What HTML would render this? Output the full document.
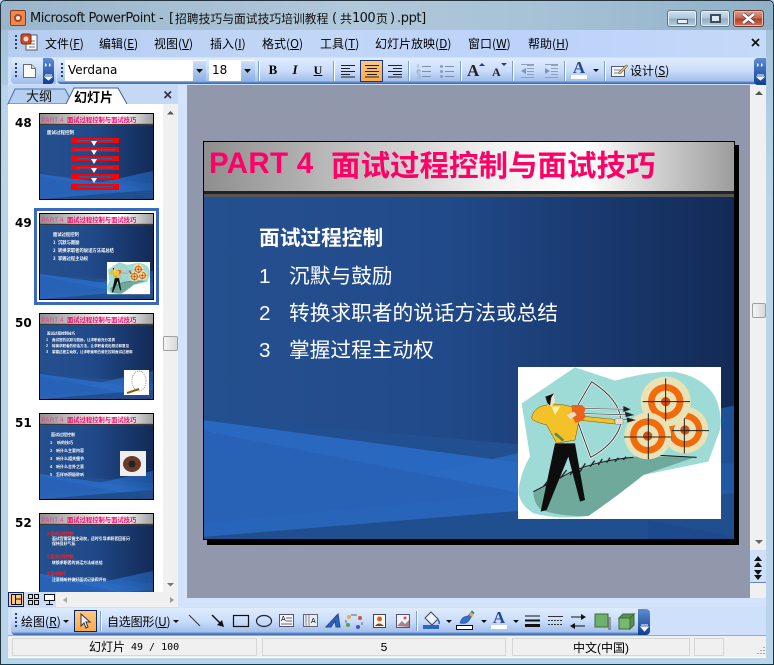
<!DOCTYPE html>
<html><head><meta charset="utf-8"><style>
html,body{margin:0;padding:0;width:774px;height:665px;overflow:hidden;background:#b9d5ec}
*{box-sizing:border-box}
.a{position:absolute}
.t{position:absolute;font:12px/14px "Liberation Sans","Noto Sans CJK SC",sans-serif;color:#000;white-space:nowrap}
.m{position:absolute;top:36px;font:12px/15px "WenQuanYi Zen Hei","Noto Sans CJK SC",sans-serif;white-space:nowrap;color:#000}
u{text-decoration:underline}
.sep{position:absolute;background:#7f9fce;border-right:1px solid #fff;width:2px}
.grip{position:absolute;width:2px;background:repeating-linear-gradient(#27416b 0 2px,#fff0 2px 4px)}
.st{position:absolute;top:638px;height:18px;background:#f0f0f0;border:1px solid #d6d6d6;text-align:center;font:12px/18px "Liberation Mono","WenQuanYi Zen Hei",monospace}
svg{position:absolute;overflow:visible}
.tp{font-family:"Liberation Sans",sans-serif;font-size:6.200px;fill:#e8408a;letter-spacing:.2px}
.tc{font-family:"Noto Sans CJK SC",sans-serif;font-size:6.300px;font-weight:bold;fill:#ff0066}
</style></head><body>
<!-- window frame -->
<div class="a" style="left:0;top:0;width:774px;height:665px;background:linear-gradient(#9fbcd2,#a9c8e0 10%,#b9d5ec 30%);border:1px solid #24323c;border-bottom-color:#0c3c44;border-radius:5px 5px 0 0"></div>
<div class="a" style="left:1px;top:1px;width:772px;height:29px;background:linear-gradient(90deg,#9ab6cc,#b0c8da 45%,#a7c2d6 70%,#8fb0c8);border-radius:5px 5px 0 0"></div>
<!-- app icon -->
<div class="a" style="left:10px;top:10px;width:16px;height:16px;background:#e88a52;border:1px solid #8a3b18;border-radius:2px"><div class="a" style="left:3px;top:3px;width:8px;height:8px;border-radius:50%;background:#fff2dc;border:2px solid #b8401f"></div></div>
<div class="t" style="left:30px;top:11px;font:13px/16px 'DejaVu Sans',sans-serif;color:#111;letter-spacing:-.48px">Microsoft PowerPoint</div>
<div class="t" style="left:159px;top:11px;font:13px/16px 'DejaVu Sans',sans-serif;color:#111">-</div>
<div class="t" style="left:169px;top:11px;font:13px/16px 'DejaVu Sans',sans-serif;color:#111">[</div>
<div class="t" style="left:175px;top:11px;font:11.800px/16px 'WenQuanYi Zen Hei','Noto Sans CJK SC',sans-serif;color:#111">招聘技巧与面试技巧培训教程</div>
<div class="t" style="left:332px;top:11px;font:13px/16px 'DejaVu Sans',sans-serif;color:#111">(</div>
<div class="t" style="left:340px;top:11px;font:12px/16px 'WenQuanYi Zen Hei','Noto Sans CJK SC',sans-serif;color:#111">共</div>
<div class="t" style="left:352px;top:11px;font:13px/16px 'DejaVu Sans',sans-serif;color:#111;letter-spacing:-.6px">100</div>
<div class="t" style="left:376px;top:11px;font:12px/16px 'WenQuanYi Zen Hei','Noto Sans CJK SC',sans-serif;color:#111">页</div>
<div class="t" style="left:390px;top:11px;font:13px/16px 'DejaVu Sans',sans-serif;color:#111">)</div>
<div class="t" style="left:397px;top:11px;font:13px/16px 'DejaVu Sans',sans-serif;color:#111;letter-spacing:-.4px">.ppt]</div>
<!-- window buttons -->
<div class="a" style="left:667px;top:10px;width:30px;height:17px;border:1px solid #5f7486;border-radius:3px;background:linear-gradient(#d3e1ec,#aec6d8 50%,#8fabc0 52%,#b5cfe0);box-shadow:inset 0 0 0 1px #e4eef5"><div class="a" style="left:9px;top:8px;width:11px;height:5px;background:#e8f0f5;border:1px solid #52616e"></div></div>
<div class="a" style="left:700px;top:10px;width:30px;height:17px;border:1px solid #5f7486;border-radius:3px;background:linear-gradient(#d3e1ec,#aec6d8 50%,#8fabc0 52%,#b5cfe0);box-shadow:inset 0 0 0 1px #e4eef5"><div class="a" style="left:9px;top:3px;width:11px;height:9px;background:#dfe8ee;border:2px solid #3e4c58"></div></div>
<div class="a" style="left:733px;top:10px;width:31px;height:17px;border:1px solid #6b3a34;border-radius:3px;background:linear-gradient(#dd9c8e,#c9644f 50%,#ae3d26 52%,#cf7458);box-shadow:inset 0 0 0 1px #eab9ab"></div>
<svg style="left:733px;top:10px" width="31" height="17"><path d="M10 4L21 13M21 4L10 13" stroke="#445" stroke-width="4"/><path d="M10 4L21 13M21 4L10 13" stroke="#fff" stroke-width="2.600"/></svg>
<!-- menu bar -->
<div class="a" style="left:8px;top:30px;width:758px;height:27px;background:linear-gradient(90deg,#b5cdf0,#c2d7f8 40%,#bcd2fa 70%,#c5daf8)"></div>
<div class="grip" style="left:15px;top:35px;height:16px"></div>
<svg style="left:20px;top:33px" width="18" height="20"><rect x="6" y="2" width="11" height="15" fill="#f8f8f4" stroke="#556"/><path d="M9 8h6M9 11h6M9 14h6" stroke="#778"/><rect x="1" y="1" width="10" height="10" rx="2" fill="#cf4a2c" stroke="#7a2a18"/><circle cx="6" cy="6" r="2.500" fill="#f6d8c6"/></svg>
<div class="m" style="left:45px">文件(<u>F</u>)</div>
<div class="m" style="left:99px">编辑(<u>E</u>)</div>
<div class="m" style="left:154px">视图(<u>V</u>)</div>
<div class="m" style="left:210px">插入(<u>I</u>)</div>
<div class="m" style="left:262px">格式(<u>O</u>)</div>
<div class="m" style="left:320px">工具(<u>T</u>)</div>
<div class="m" style="left:375px">幻灯片放映(<u>D</u>)</div>
<div class="m" style="left:468px">窗口(<u>W</u>)</div>
<div class="m" style="left:528px">帮助(<u>H</u>)</div>
<svg style="left:750px;top:37px" width="12" height="12"><path d="M2 2L9 9M9 2L2 9" stroke="#111" stroke-width="1.700"/></svg>
<!-- standard toolbar -->
<div class="a" style="left:8px;top:57px;width:758px;height:28px;background:#cfe0fb"></div>
<div class="a" style="left:11px;top:58px;width:45px;height:26px;border-radius:4px 0 0 4px;background:linear-gradient(#dfecfd,#c3d7f7 55%,#9fbcea)"></div>
<div class="a" style="left:43px;top:58px;width:11px;height:26px;border-radius:0 4px 4px 0;background:linear-gradient(#5f8bd0,#0f3f94)"></div>
<div class="a" style="left:57px;top:58px;width:700px;height:26px;border-radius:4px 0 0 4px;background:linear-gradient(#dfecfd,#c9dcfa 50%,#a3bfeb 88%,#3f70b8 96%)"></div>
<div class="a" style="left:754px;top:58px;width:12px;height:27px;border-radius:4px 0 0 4px;background:linear-gradient(#5f8bd0,#0f3f94)"></div>
<svg style="left:44px;top:60px" width="10" height="22"><path d="M1 3l2 2-2 2zM5 3l2 2-2 2z" fill="#fff"/><path d="M1 15h7M1 17h7l-3.500 3z" stroke="#fff" fill="#fff"/></svg>
<svg style="left:755px;top:60px" width="10" height="22"><path d="M2 3l2 2-2 2zM6 3l2 2-2 2z" fill="#fff"/><path d="M2 15h7M2 17h7l-3.500 3z" stroke="#fff" fill="#fff"/></svg>
<div class="grip" style="left:15px;top:63px;height:16px"></div>
<div class="grip" style="left:61px;top:63px;height:16px"></div>
<svg style="left:23px;top:64px" width="13" height="14"><path d="M.5.500h8l4 4v9H.5z" fill="#fbfbf6" stroke="#6a6a6a"/><path d="M8.500.500v4h4" fill="#ddd" stroke="#777"/></svg>
<div class="a" style="left:65px;top:60px;width:141px;height:21px;background:#fff"></div>
<div class="t" style="left:68px;top:63px;font:12px/14px 'DejaVu Sans',sans-serif">Verdana</div>
<div class="a" style="left:193px;top:61px;width:13px;height:20px;background:linear-gradient(#cddffa,#8fb0e4)"></div>
<svg style="left:193px;top:67px" width="13" height="8"><path d="M3 2h7l-3.500 4z" fill="#111"/></svg>
<div class="a" style="left:209px;top:60px;width:46px;height:21px;background:#fff"></div>
<div class="t" style="left:212px;top:63px;font:12px/14px 'DejaVu Sans',sans-serif">18</div>
<div class="a" style="left:241px;top:61px;width:14px;height:20px;background:linear-gradient(#cddffa,#8fb0e4)"></div>
<svg style="left:241px;top:67px" width="14" height="8"><path d="M3 2h7l-3.500 4z" fill="#111"/></svg>
<div class="sep" style="left:258px;top:61px;height:20px"></div>
<div class="t" style="left:267px;top:62px;width:12px;text-align:center;font:bold 13px/16px 'Liberation Serif',serif">B</div>
<div class="t" style="left:289px;top:62px;width:12px;text-align:center;font:italic bold 13px/16px 'Liberation Serif',serif">I</div>
<div class="t" style="left:312px;top:62px;width:12px;text-align:center;font:bold 12px/16px 'Liberation Serif',serif;text-decoration:underline">U</div>
<div class="sep" style="left:333px;top:61px;height:20px"></div>
<svg style="left:340px;top:64px" width="16" height="14"><path d="M1 1.500h14M1 4.500h9M1 7.500h14M1 10.500h9M1 13h14" stroke="#222"/></svg>
<div class="a" style="left:360px;top:60px;width:23px;height:22px;background:linear-gradient(#ffc97c,#fea94a);border:1px solid #1d3a80"></div>
<svg style="left:364px;top:64px" width="16" height="14"><path d="M1 1.500h14M3 4.500h10M1 7.500h14M3 10.500h10M1 13h14" stroke="#222"/></svg>
<svg style="left:387px;top:64px" width="16" height="14"><path d="M1 1.500h14M6 4.500h9M1 7.500h14M6 10.500h9M1 13h14" stroke="#222"/></svg>
<div class="sep" style="left:408px;top:61px;height:20px"></div>
<svg style="left:416px;top:63px" width="16" height="16"><path d="M6 3.500h9M6 8.500h9M6 13.500h9" stroke="#7d8ea8"/><path d="M2 1v4M1 7h3v1H1v2h3M1 12h3v3H1" stroke="#a3b0c4" fill="none"/></svg>
<svg style="left:439px;top:63px" width="16" height="16"><path d="M6 3.500h9M6 8.500h9M6 13.500h9" stroke="#7d8ea8"/><circle cx="2.500" cy="3.500" r="1.500" fill="#8e9cb2"/><circle cx="2.500" cy="8.500" r="1.500" fill="#8e9cb2"/><circle cx="2.500" cy="13.500" r="1.500" fill="#8e9cb2"/></svg>
<div class="sep" style="left:460px;top:61px;height:20px"></div>
<div class="t" style="left:467px;top:62px;font:bold 17px/18px 'Liberation Serif',serif;color:#222">A</div>
<svg style="left:478px;top:62px" width="8" height="5"><path d="M1 4h6L4 1z" fill="#1f3f82"/></svg>
<div class="t" style="left:492px;top:66px;font:bold 12px/13px 'Liberation Serif',serif;color:#222">A</div>
<svg style="left:500px;top:62px" width="8" height="5"><path d="M1 1h6L4 4z" fill="#1f3f82"/></svg>
<div class="sep" style="left:512px;top:61px;height:20px"></div>
<svg style="left:519px;top:63px" width="16" height="16"><path d="M8 2.500h7M8 5.500h7M8 8.500h7M8 11.500h7M2 14.500h13M2 1.500h13" stroke="#90a0b8"/><path d="M7 5v6L2 8z" fill="#7e95bd"/></svg>
<svg style="left:543px;top:63px" width="16" height="16"><path d="M8 2.500h7M8 5.500h7M8 8.500h7M8 11.500h7M2 14.500h13M2 1.500h13" stroke="#90a0b8"/><path d="M2 5v6l5-3z" fill="#7e95bd"/></svg>
<div class="sep" style="left:564px;top:61px;height:20px"></div>
<div class="t" style="left:571px;top:59px;width:16px;text-align:center;font:bold 17px/17px 'Liberation Serif',serif;color:#27498e">A</div>
<div class="a" style="left:571px;top:75px;width:16px;height:4px;background:#fff"></div>
<svg style="left:592px;top:68px" width="8" height="5"><path d="M1 1h6L4 4z" fill="#111"/></svg>
<div class="sep" style="left:604px;top:61px;height:20px"></div>
<svg style="left:611px;top:63px" width="18" height="15"><rect x=".5" y="3.500" width="13" height="10" fill="#f4f6fa" stroke="#4d5a7a"/><path d="M3 7h7M3 10h5" stroke="#7788aa"/><path d="M7 10l8-8 2 1-8 8z" fill="#e5c33c" stroke="#6a6a7a" stroke-width=".6"/></svg>
<div class="m" style="left:630px;top:63px">设计(<u>S</u>)</div>
<!-- left panel -->
<div class="a" style="left:2px;top:85px;width:176px;height:522px;background:#b9d5ec"></div>
<div class="a" style="left:178px;top:85px;width:9px;height:522px;background:#d3e3fb"></div>
<div class="a" style="left:8px;top:85px;width:170px;height:19px;background:#c5d9f6"></div>
<svg style="left:8px;top:87px" width="122" height="18"><path d="M0 17L7 2h50l8 15z" fill="#b5cff0" stroke="#4a6ea8"/><path d="M58 17L66 1h44l9 16z" fill="#fff"/><path d="M58 17L66 1h44l9 16" fill="none" stroke="#3f5f98"/></svg>
<div class="t" style="left:26px;top:89px;font:13px/15px 'WenQuanYi Zen Hei',sans-serif;color:#111">大纲</div>
<div class="t" style="left:74px;top:89px;font:bold 13px/15px 'WenQuanYi Zen Hei','Noto Sans CJK SC',sans-serif">幻灯片</div>
<svg style="left:163px;top:90px" width="10" height="10"><path d="M1.500 1.500L8 8M8 1.500L1.500 8" stroke="#334" stroke-width="1.700"/></svg>
<div class="a" style="left:8px;top:104px;width:155px;height:488px;background:#fff"></div>
<div class="a" style="left:163px;top:104px;width:15px;height:488px;background:#f0f0f0"></div>
<svg style="left:166px;top:110px" width="9" height="6"><path d="M1 4.500h7L4.500 1z" fill="#555"/></svg>
<svg style="left:166px;top:582px" width="9" height="6"><path d="M1 1h7L4.500 4.500z" fill="#777"/></svg>
<div class="a" style="left:163px;top:336px;width:15px;height:15px;background:linear-gradient(90deg,#f4f4f4,#d8d8d8);border:1px solid #a0a0a0;border-radius:2px"></div>
<!-- shared slide background + picture -->
<svg width="0" height="0" style="left:0;top:0"><defs>
<linearGradient id="g" x1="0" y1="0" x2="1" y2="0"><stop offset="0" stop-color="#25508f"/><stop offset=".45" stop-color="#214a8a"/><stop offset="1" stop-color="#132a56"/></linearGradient>
<linearGradient id="h" x1="0" y1="0" x2="1" y2="0"><stop offset="0" stop-color="#8e8e8e"/><stop offset=".55" stop-color="#f2f2f2"/><stop offset=".72" stop-color="#fff"/><stop offset="1" stop-color="#9c9c9c"/></linearGradient>
<linearGradient id="w" x1="0" y1="0" x2="1" y2="0"><stop offset="0" stop-color="#2a6ac4"/><stop offset=".7" stop-color="#2a6ac4"/><stop offset="1" stop-color="#1f5aa8"/></linearGradient>
<symbol id="bg" viewBox="0 0 531 399" preserveAspectRatio="none">
<rect width="531" height="399" fill="url(#g)"/>
<g transform="translate(1,1)">
<path d="M-1 274L531 322V399H-1z" fill="#224f90"/>
<path d="M-1 278L531 350V394L-1 289z" fill="url(#w)" opacity=".92"/>
<path d="M-1 381L531 263V351L-1 395z" fill="url(#w)" opacity=".78"/>
<path d="M-1 289L315 351L-1 381z" fill="#2862b6"/>
<path d="M-1 395L531 351V399H-1z" fill="#204f90"/>
<path d="M443 378L531 395V399H443z" fill="#1d4a8c"/>
</g>
<rect width="531" height="50" fill="url(#h)"/>
<rect y="50" width="531" height="3" fill="#222"/>
<rect y="53" width="531" height="3" fill="#555"/>
</symbol>
<g id="arch">
<rect x="54" y="51" width="609" height="456" fill="#fff"/>
<path d="M65 160L225 52L345 92Q440 65 520 65Q610 80 645 140Q668 190 660 240L625 335L430 375Q350 440 265 498Q180 510 100 490Q55 460 55 420Q65 360 90 320Z" fill="#9edbd6"/>
<path d="M100 425Q250 340 400 320L590 320L430 375Q350 440 265 498Q180 500 125 480Q100 460 100 425Z" fill="#6fa99c"/>
<path d="M100 425L215 365M215 365Q300 330 400 322M480 316L590 322" stroke="#111" stroke-width="3" fill="none"/>
<path d="M130 410l20-25M150 400l20-25M180 385l20-25M210 375l18-25M240 365l16-25M270 350l14-18M295 345l12-18M320 338l10-15M345 335l10-12M370 330l8-10" stroke="#222" stroke-width="4"/>
<circle cx="555" cy="240" r="70" fill="#e9e2b6"/><circle cx="555" cy="240" r="52" fill="#f26a09"/><circle cx="555" cy="240" r="33" fill="#e9e2b6"/><circle cx="555" cy="240" r="14" fill="#d94f05"/>
<path d="M515 242h112M553 195v115" stroke="#222" stroke-width="3"/>
<circle cx="497" cy="155" r="75" fill="#e9e2b6"/><circle cx="497" cy="155" r="53" fill="#f26a09"/><circle cx="497" cy="155" r="33" fill="#e9e2b6"/><circle cx="497" cy="155" r="14" fill="#d94f05"/>
<path d="M428 155h142M497 85v130" stroke="#222" stroke-width="3"/>
<circle cx="443" cy="258" r="70" fill="#e9e2b6"/><circle cx="443" cy="258" r="53" fill="#f26a09"/><circle cx="443" cy="258" r="33" fill="#e9e2b6"/><circle cx="443" cy="258" r="14" fill="#d94f05"/>
<path d="M372 261h142M445 190v138" stroke="#222" stroke-width="3"/>
<path d="M275 95Q375 160 360 230Q340 285 272 322L222 185Z" fill="none" stroke="#fff" stroke-width="7"/>
<path d="M275 95Q375 160 360 230Q340 285 272 322L222 185Z" fill="none" stroke="#333" stroke-width="3"/>
<path d="M230 175L385 178M230 190L395 195M240 205L405 210" stroke="#fff" stroke-width="5"/>
<path d="M230 175L385 178M230 190L395 195M240 205L405 210" stroke="#333" stroke-width="2"/>
<path d="M370 168l22 10-22 8zM375 185l28 10-26 6zM380 202l28 8-26 8z" fill="#222"/>
<path d="M122 485L165 280H225L255 450L240 455L205 320L140 480Z" fill="#0d0d0d"/>
<path d="M120 170Q160 155 215 170L235 210L345 222V208L240 198L225 270L170 280L140 225Q100 215 95 205Q95 185 120 170Z" fill="#f2c228" stroke="#6a5410" stroke-width="1.500"/>
<path d="M155 170l25 0-15 25z" fill="#fff3b0"/>
<path d="M165 250l25 22" stroke="#5c8a4f" stroke-width="8"/>
<path d="M140 135l22-5 3 25-10 15-12-5z" fill="#f2e0d0"/><path d="M136 140l26-10-8 12-4 25-8-8z" fill="#111"/>
<path d="M215 165h30l12 10-5 14 5 10-8 12-22 8-10-18z" fill="#e8641a"/>
<rect x="345" y="205" width="24" height="18" rx="4" fill="#eddccb" stroke="#555"/>
<path d="M200 195l22-10 8 10-18 12z" fill="#f0dcc8"/>
</g>
</defs></svg>
<!-- thumbs -->
<div class="t" style="left:15px;top:116px;font:bold 12px/14px 'DejaVu Sans',sans-serif">48</div>
<div class="t" style="left:15px;top:216px;font:bold 12px/14px 'DejaVu Sans',sans-serif">49</div>
<div class="t" style="left:15px;top:316px;font:bold 12px/14px 'DejaVu Sans',sans-serif">50</div>
<div class="t" style="left:15px;top:416px;font:bold 12px/14px 'DejaVu Sans',sans-serif">51</div>
<div class="t" style="left:15px;top:516px;font:bold 12px/14px 'DejaVu Sans',sans-serif">52</div>
<div class="a" style="left:34px;top:208px;width:125px;height:97px;border:3px solid #3a69bd"></div>
<svg style="left:39px;top:113px" width="115" height="87"><use href="#bg" width="115" height="87"/><rect x=".5" y=".5" width="114" height="86" fill="none" stroke="#000"/>
<text x="2.500" y="9" class="tp">PART 4</text><text x="28" y="9" class="tc">面试过程控制与面试技巧</text>
<text x="8" y="21" font-size="4.500" fill="#fff" font-weight="bold" font-family="Noto Sans CJK SC">面试过程控制</text>
<g fill="#f00"><rect x="32" y="25" width="48" height="5"/><rect x="32" y="34" width="48" height="5"/><rect x="32" y="43" width="48" height="5"/><rect x="32" y="52" width="48" height="5"/><rect x="32" y="61" width="48" height="5"/><rect x="32" y="71" width="48" height="6"/></g>
<g fill="#2c5ea8"><rect x="38" y="27" width="36" height="1.500"/><rect x="36" y="36" width="40" height="1.500"/><rect x="38" y="45" width="36" height="1.500"/><rect x="38" y="54" width="36" height="1.500"/><rect x="40" y="63" width="32" height="1.500"/><rect x="38" y="73" width="36" height="1.500"/></g>
<g fill="#fff"><path d="M52 28h6l-3 5zM52 37h6l-3 5zM52 46h6l-3 5zM52 55h6l-3 5zM52 65h6l-3 5z"/></g></svg>
<svg style="left:39px;top:213px" width="115" height="87"><use href="#bg" width="115" height="87"/><rect x=".5" y=".5" width="114" height="86" fill="none" stroke="#000"/>
<text x="2.500" y="9" class="tp">PART 4</text><text x="28" y="9" class="tc">面试过程控制与面试技巧</text>
<g fill="#fff" font-family="Noto Sans CJK SC" font-size="4.300" font-weight="bold"><text x="14" y="23">面试过程控制</text><text x="14" y="31">1</text><text x="19" y="31">沉默与鼓励</text><text x="14" y="39">2</text><text x="19" y="39">转换求职者的说话方法或总结</text><text x="14" y="47">3</text><text x="19" y="47">掌握过程主动权</text></g>
<g transform="translate(68,49) scale(.0706) translate(-54,-51)"><use href="#arch"/></g></svg>
<svg style="left:39px;top:313px" width="115" height="87"><use href="#bg" width="115" height="87"/><rect x=".5" y=".5" width="114" height="86" fill="none" stroke="#000"/>
<text x="2.500" y="9" class="tp">PART 4</text><text x="28" y="9" class="tc">面试过程控制与面试技巧</text>
<g fill="#fff" font-family="Noto Sans CJK SC" font-size="3.500" font-weight="bold"><text x="8" y="21.500">面试过程控制技巧</text><text x="7" y="28">1</text><text x="13" y="28">面试官的沉默与鼓励，让求职者充分发表</text><text x="7" y="34">2</text><text x="13" y="34">转换求职者的说话方法，让求职者说出想法和意见</text><text x="7" y="40">3</text><text x="13" y="40">掌握过程主动权，让求职者明白谁在控制面试过程和</text></g>
<rect x="85" y="57" width="25" height="25" fill="#fff"/><ellipse cx="100" cy="68" rx="7" ry="10" fill="#fff" stroke="#999" stroke-dasharray="1 1"/><path d="M88 80l12-4" stroke="#8a5a14" stroke-width="2"/></svg>
<svg style="left:39px;top:413px" width="115" height="87"><use href="#bg" width="115" height="87"/><rect x=".5" y=".5" width="114" height="86" fill="none" stroke="#000"/>
<text x="2.500" y="9" class="tp">PART 4</text><text x="28" y="9" class="tc">面试过程控制与面试技巧</text>
<g fill="#fff" font-family="Noto Sans CJK SC" font-size="4" font-weight="bold"><text x="12" y="23">面试过程控制</text><text x="11" y="31">1</text><text x="18" y="31">听的技巧</text><text x="11" y="39">2</text><text x="17" y="39">听什么主要内容</text><text x="11" y="47">3</text><text x="17" y="47">听什么相关细节</text><text x="11" y="55">4</text><text x="17" y="55">听什么言外之意</text><text x="11" y="63">5</text><text x="17" y="63">怎样听积极聆听</text></g>
<rect x="81" y="38" width="26" height="25" fill="#eee"/><ellipse cx="93" cy="51" rx="9" ry="8" fill="#6b3b2a"/><circle cx="93" cy="51" r="3.500" fill="#222"/></svg>
<div class="a" style="left:39px;top:513px;width:115px;height:79px;overflow:hidden"><svg style="left:0;top:0" width="115" height="87"><use href="#bg" width="115" height="87"/><rect x=".5" y=".5" width="114" height="86" fill="none" stroke="#000"/>
<text x="2.500" y="9" class="tp">PART 4</text><text x="28" y="9" class="tc">面试过程控制与面试技巧</text>
<g font-family="Noto Sans CJK SC" font-size="3.900" font-weight="bold"><text x="8" y="22" fill="#f22">1 面试过程控制</text><text x="13" y="27" fill="#fff">面试官需掌握主动权，适时引导求职者回答问</text><text x="13" y="32" fill="#fff">保持良好气氛</text><text x="8" y="45" fill="#f22">2 面试过程控制</text><text x="13" y="51" fill="#fff">转换求职者的说话方法或总结</text><text x="8" y="62" fill="#f22">3 面试技巧</text><text x="13" y="68" fill="#fff">注意倾听并做好面试记录和评价</text></g></svg></div>
<!-- bottom left view buttons -->
<div class="a" style="left:8px;top:592px;width:48px;height:15px;background:#c9dcf8"></div>
<div class="a" style="left:56px;top:592px;width:122px;height:15px;background:#f0f0f0"></div>
<div class="a" style="left:8px;top:592px;width:16px;height:15px;background:#ffc97c;border:1px solid #0a246a"></div>
<svg style="left:11px;top:594px" width="50" height="12"><rect x=".5" y=".5" width="10" height="10" fill="none" stroke="#111"/><path d="M4.500 1v9M5 5h5" stroke="#111"/><path d="M17.500.500h4v4h-4zM23.500.500h4v4h-4zM17.500 6.500h4v4h-4zM23.500 6.500h4v4h-4z" fill="none" stroke="#111"/><rect x="33.500" y=".5" width="10" height="6" fill="#fff" stroke="#111"/><path d="M38.500 7v3M35 10.500h7" stroke="#111"/></svg>
<svg style="left:62px;top:596px" width="112" height="8"><path d="M5 1v6L1 4z" fill="#aaa"/><path d="M108 1v6l4-3z" fill="#999"/></svg>
<!-- main area -->
<div class="a" style="left:187px;top:85px;width:563px;height:513px;background:#9198ac"></div>
<div class="a" style="left:750px;top:85px;width:16px;height:522px;background:#f0f0f0"></div>
<svg style="left:754px;top:90px" width="10" height="6"><path d="M1 5h8L5 1z" fill="#555"/></svg>
<svg style="left:754px;top:539px" width="10" height="6"><path d="M1 1h8L5 5z" fill="#666"/></svg>
<div class="a" style="left:752px;top:303px;width:14px;height:15px;background:linear-gradient(90deg,#f4f4f4,#d8d8d8);border:1px solid #a0a0a0;border-radius:2px"></div>
<div class="a" style="left:750px;top:550px;width:16px;height:33px;background:#cfe0fb;border-bottom:1px solid #5f86cc"></div>
<svg style="left:752px;top:555px" width="12" height="26"><path d="M2 6h8L6 1zM2 12h8L6 7zM2 15h8l-4 5zM2 20h8l-4 5z" fill="#111"/></svg>
<div class="a" style="left:187px;top:598px;width:579px;height:10px;background:#d3e3fb;border-bottom:1px solid #6a8fc8"></div>
<!-- slide -->
<div class="a" style="left:207px;top:145px;width:532px;height:400px;background:#000"></div>
<svg style="left:203px;top:141px" width="532" height="399"><use href="#bg" width="532" height="399"/><rect x=".5" y=".5" width="531" height="398" fill="none" stroke="#000"/></svg>
<div class="t" style="left:209px;top:146px;font:bold 29.500px/36px 'Liberation Sans',sans-serif;color:#ff0066;letter-spacing:.3px">PART 4</div>
<div class="t" style="left:331px;top:146px;font:bold 29.500px/36px 'Noto Sans CJK SC',sans-serif;color:#ff0066">面试过程控制与面试技巧</div>
<div class="t" style="left:259px;top:223px;font:bold 20.700px/26px 'Noto Sans CJK SC',sans-serif;color:#fff">面试过程控制</div>
<div class="t" style="left:259px;top:261px;font:20.700px/26px 'Noto Sans CJK SC',sans-serif;color:#fff"><span style="display:inline-block;width:30px;font-family:'Liberation Sans'">1</span>沉默与鼓励</div>
<div class="t" style="left:259px;top:298px;font:20.700px/26px 'Noto Sans CJK SC',sans-serif;color:#fff"><span style="display:inline-block;width:30px;font-family:'Liberation Sans'">2</span>转换求职者的说话方法或总结</div>
<div class="t" style="left:259px;top:335px;font:20.700px/26px 'Noto Sans CJK SC',sans-serif;color:#fff"><span style="display:inline-block;width:30px;font-family:'Liberation Sans'">3</span>掌握过程主动权</div>
<!-- archer picture -->
<svg style="left:500px;top:350px" width="240" height="200" viewBox="0 0 720 600"><use href="#arch"/></svg>
<!-- bottom toolbar -->
<div class="a" style="left:8px;top:607px;width:758px;height:28px;background:#cfe0fb"></div>
<div class="a" style="left:11px;top:608px;width:630px;height:27px;border-radius:4px 0 0 4px;background:linear-gradient(#dfecfd,#c9dcfa 50%,#a3bfeb 88%,#3f70b8 97%)"></div>
<div class="a" style="left:638px;top:609px;width:12px;height:26px;border-radius:0 4px 4px 0;background:linear-gradient(#5f8bd0,#0f3f94)"></div>
<svg style="left:640px;top:622px" width="10" height="12"><path d="M1 3h7M1 5h7l-3.500 4z" stroke="#fff" fill="#fff"/></svg>
<div class="grip" style="left:15px;top:613px;height:16px"></div>
<div class="m" style="left:21px;top:614px">绘图(<u>R</u>)</div>
<svg style="left:62px;top:619px" width="8" height="5"><path d="M1 1h6L4 4z" fill="#111"/></svg>
<div class="a" style="left:74px;top:610px;width:23px;height:22px;background:linear-gradient(#ffc97c,#fea94a);border:1px solid #0a246a"></div>
<svg style="left:79px;top:613px" width="13" height="16"><path d="M2 1v12l3-3 2 5 2-1-2-5h4z" fill="#eaf0fa" stroke="#334"/></svg>
<div class="sep" style="left:100px;top:611px;height:20px"></div>
<div class="m" style="left:107px;top:614px;letter-spacing:-.2px">自选图形(<u>U</u>)</div>
<svg style="left:172px;top:619px" width="8" height="5"><path d="M1 1h6L4 4z" fill="#111"/></svg>
<svg style="left:186px;top:612px" width="220" height="20"><path d="M3 3L14 14" stroke="#333"/><path d="M26 3L35 12" stroke="#111" stroke-width="1.500"/><path d="M38 15l-7-2 5-5z" fill="#111"/><rect x="47.500" y="3.500" width="15" height="11" fill="none" stroke="#111" stroke-width="1.200"/><ellipse cx="78" cy="9" rx="7.500" ry="5.500" fill="none" stroke="#223" stroke-width="1.200"/><rect x="93.500" y="2.500" width="14" height="12" fill="#f6f8fc" stroke="#557"/><path d="M100 6h6M100 9h6M95 12h11" stroke="#667"/><text x="95" y="9" font-size="7" font-family="Liberation Sans">A</text><rect x="117.500" y="2.500" width="14" height="12" fill="#e8eef8" stroke="#667"/><path d="M120 3v11M123 3v11" stroke="#889"/><text x="125" y="11" font-size="7" font-family="Liberation Sans">A</text><path d="M140 15L152 2L154 15L150 15L149 9L145 15Z" fill="#2f62c0" stroke="#24488e"/><circle cx="163" cy="5" r="2" fill="#d9b73c"/><circle cx="174" cy="6" r="2" fill="#d9533c"/><circle cx="162" cy="13" r="2" fill="#5a9a4f"/><circle cx="172" cy="15" r="2" fill="#3f56b6"/><path d="M165 3h6M176 10v3M160 8v3" stroke="#666"/><rect x="187.500" y="2.500" width="12" height="13" fill="#f8f6ee" stroke="#444"/><circle cx="193.500" cy="7" r="2.500" fill="#c96a2a"/><path d="M189 14q4-5 9 0" fill="#7a4a2a"/><rect x="210.500" y="2.500" width="13" height="13" fill="#eef4fb" stroke="#556"/><path d="M211 14l5-5 3 3 4-4v7z" fill="#a87f8c"/><circle cx="219" cy="6" r="1.500" fill="#d9533c"/></svg>
<div class="sep" style="left:416px;top:611px;height:20px"></div>
<svg style="left:422px;top:611px" width="20" height="19"><path d="M9 1l7 7-6 6-7-7z" fill="#eef2fa" stroke="#445"/><path d="M15 8q3 2 2 5" stroke="#2b66c4" stroke-width="1.500" fill="none"/><rect x="1" y="14" width="16" height="4" fill="#2b66c4"/></svg>
<svg style="left:445px;top:619px" width="8" height="5"><path d="M1 1h6L4 4z" fill="#111"/></svg>
<svg style="left:456px;top:611px" width="20" height="20"><path d="M4 12q2-7 8-7l4-5 2 2-4 6q-3 6-10 4z" fill="#3a6fc6" stroke="#23488c" stroke-width=".6"/><path d="M15 1l3 2-2 3-3-2z" fill="#dcb42c"/><rect x=".5" y="14.500" width="16" height="4" fill="#fff" stroke="#111"/></svg>
<svg style="left:480px;top:619px" width="8" height="5"><path d="M1 1h6L4 4z" fill="#111"/></svg>
<div class="t" style="left:491px;top:609px;width:16px;text-align:center;font:bold 17px/17px 'Liberation Serif',serif;color:#27498e">A</div>
<div class="a" style="left:491px;top:625px;width:16px;height:4px;background:#fff"></div>
<svg style="left:512px;top:619px" width="8" height="5"><path d="M1 1h6L4 4z" fill="#111"/></svg>
<svg style="left:524px;top:613px" width="124" height="18"><path d="M1 3h15" stroke="#111" stroke-width="1"/><path d="M1 7.500h15" stroke="#111" stroke-width="2"/><path d="M1 12.500h15" stroke="#111" stroke-width="3"/><path d="M24 3.500h15" stroke="#333"/><path d="M24 7.500h15M24 11.500h15" stroke="#333" stroke-dasharray="2 1"/><path d="M47 4h14M47 13h14" stroke="#111"/><path d="M57 1l5 3-5 3zM51 10l-5 3 5 3z" fill="#111"/><rect x="71" y="1" width="13" height="13" fill="#6fb06a" stroke="#3a6a3a"/><rect x="84" y="4" width="3" height="13" fill="#555" opacity=".5"/><path d="M95 5h11v11H95z" fill="#7ab86e" stroke="#3a6a3a"/><path d="M95 5l4-4h11l-4 4zM106 5l4-4v11l-4 4z" fill="#5a8f52" stroke="#3a6a3a"/></svg>
<!-- status bar -->
<div class="a" style="left:8px;top:635px;width:758px;height:23px;background:#f0f0f0;border-top:1px solid #a8a8a8;border-bottom:1px solid #fff"></div>
<div class="st" style="left:12px;width:245px"></div>
<div class="t" style="left:89px;top:639px;font:12px/16px 'WenQuanYi Zen Hei','Noto Sans CJK SC',sans-serif">幻灯片</div>
<div class="t" style="left:131px;top:640px;font:10px/16px 'DejaVu Sans Mono','Liberation Mono',monospace">49 / 100</div>
<div class="st" style="left:262px;width:244px">5</div>
<div class="st" style="left:512px;width:178px;font-family:'WenQuanYi Zen Hei',sans-serif">中文(中国)</div>
<div class="st" style="left:694px;width:30px"></div>
<svg style="left:754px;top:646px" width="12" height="11"><path d="M10 1v1M7 4v1M10 4v1M4 7v1M7 7v1M10 7v1" stroke="#aaa" stroke-width="2"/></svg>
</body></html>
